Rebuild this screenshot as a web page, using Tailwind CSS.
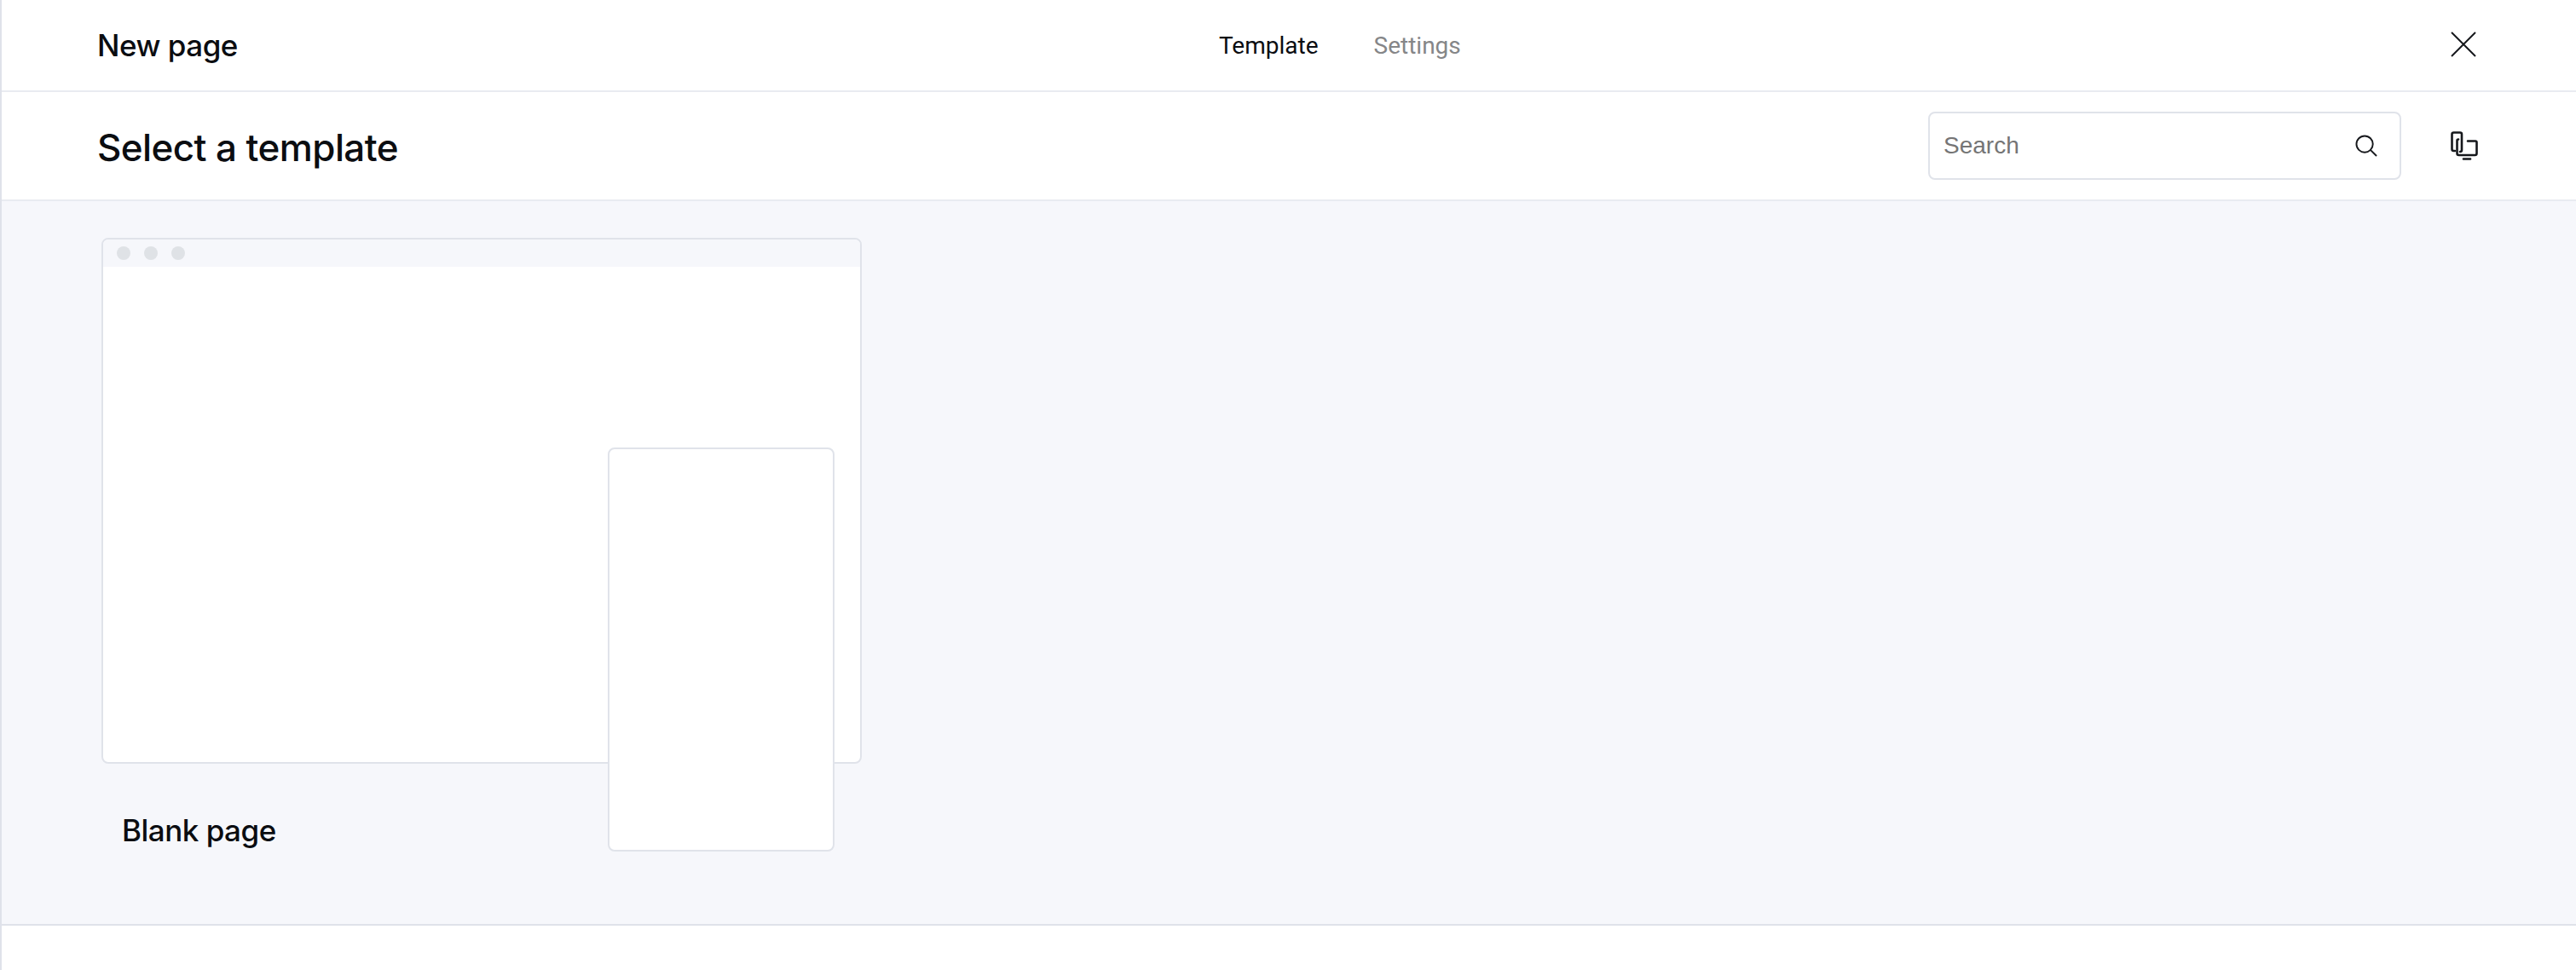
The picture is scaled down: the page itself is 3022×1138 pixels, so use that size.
<!DOCTYPE html>
<html lang="en">
<head>
    <meta charset="UTF-8">
    <title>New page</title>
    <script src="https://cdn.jsdelivr.net/npm/@tailwindcss/browser@4"></script>
</head>
<body class="bg-white font-['Inter',sans-serif] text-[#0b0d11]">
    <div class="flex h-screen flex-col border-l-2 border-[#dfe2ea]">
        <!-- top bar -->
        <div class="flex h-[108px] items-center border-b-2 border-[#e9ebf1] pl-[112px]">
            <h1 class="w-[1316px] text-[35px] leading-none font-medium tracking-[-0.5px]">New page</h1>
            <nav class="mt-[2px] flex gap-[65px] font-['Roboto',sans-serif] text-[28px] leading-none">
                <span>Template</span>
                <span class="text-[#858688]">Settings</span>
            </nav>
            <button class="-mt-[2px] ml-[1161px]">
                <svg class="size-[30px]" viewBox="0 0 30 30" fill="none" stroke="#16181c" stroke-width="2"><path d="M1 1 29 29M29 1 1 29"/></svg>
            </button>
        </div>

        <!-- heading row -->
        <div class="flex h-[128px] items-center border-b-2 border-[#e9ebf1] pl-[112px]">
            <h2 class="mt-[3px] text-[44px] leading-none font-medium tracking-[-0.6px]">Select a template</h2>
            <div class="relative ml-auto flex h-[80px] w-[555px] items-center rounded-lg border-2 border-[#e0e3ea] pl-[16px]">
                <input type="text" placeholder="Search" class="w-[460px] font-['Liberation_Sans',sans-serif] text-[28px] outline-none placeholder:text-[#757575]">
                <svg class="absolute top-[25px] right-[26px] size-[26px]" viewBox="0 0 27 27" fill="none" stroke="#16181c" stroke-width="2"><circle cx="11.5" cy="11.5" r="10"/><path d="M18.5 18.5 26 26"/></svg>
            </div>
            <button class="mr-[113px] ml-[58px]">
                <svg class="size-[34px]" viewBox="0 0 34 34" fill="none" stroke="#16181c" stroke-width="2.6" stroke-linecap="round" stroke-linejoin="round">
                    <path d="M5 23H3.5Q1.5 23 1.5 21V3.5Q1.5 1.5 3.5 1.5H11Q13 1.5 13 3.5V22Q13 24 11 24"/>
                    <path d="M9 9.5Q7.5 9.5 7.5 11V26Q7.5 28 9.5 28H28.5Q30.5 28 30.5 26V13Q30.5 11.5 29 11.5H20"/>
                    <path d="M15 32.5H23"/>
                </svg>
            </button>
        </div>

        <!-- template list -->
        <div class="h-[850px] border-b-2 border-[#dfe2ea] bg-[#f6f7fb] pt-[43px] pl-[117px]">
            <div class="relative w-[892px]">
                <div class="h-[617px] overflow-hidden rounded-lg border-2 border-[#e0e3ea] bg-white">
                    <div class="flex h-[32px] items-center gap-[16px] bg-[#f6f7fb] pl-[16px]">
                        <span class="size-[16px] rounded-full bg-[#dfe2e6]"></span>
                        <span class="size-[16px] rounded-full bg-[#dfe2e6]"></span>
                        <span class="size-[16px] rounded-full bg-[#dfe2e6]"></span>
                    </div>
                </div>
                <div class="absolute top-[246px] left-[594px] h-[474px] w-[266px] rounded-lg border-2 border-[#e0e3ea] bg-white"></div>
                <p class="mt-[61px] pl-[24px] text-[35px] leading-none font-medium tracking-[-0.5px]">Blank page</p>
            </div>
        </div>

        <div class="flex-1"></div>
    </div>
</body>
</html>
